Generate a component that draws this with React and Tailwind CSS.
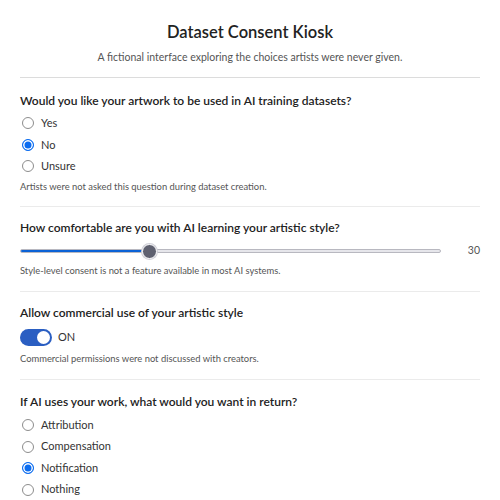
import React from "react";

function Radio({ label, checked }) {
  return (
    <div className="flex items-center h-[21.5px] pl-[2px] text-[11px] text-[#333]">
      {checked ? (
        <span className="block w-[12px] h-[12px] rounded-full border border-[#0b6cf0] bg-[#0b6cf0] shadow-[inset_0_0_0_1.5px_#ffffff]" />
      ) : (
        <span className="block w-[12px] h-[12px] rounded-full border border-[#8d8d8d] bg-white" />
      )}
      <span className="ml-[7px]">{label}</span>
    </div>
  );
}

export default function App() {
  return (
    <div className="w-[500px] h-[500px] overflow-hidden bg-white px-5 text-[#222]" style={{ fontFamily: 'Lato, "Open Sans", sans-serif' }}>
      <div className="pt-[20px] text-center">
        <h1 className="text-[16.5px] leading-6 font-semibold text-[#222]">Dataset Consent Kiosk</h1>
        <p className="mt-[3px] text-[10.5px] leading-5 text-[#555]">A fictional interface exploring the choices artists were never given.</p>
      </div>
      <div className="mt-[10px] border-t border-[#dcdcdc]" />

      <section className="pt-[13px] pb-[11px] border-b border-[#ebebeb]">
        <h2 className="text-[12px] leading-5 font-semibold">Would you like your artwork to be used in AI training datasets?</h2>
        <div className="mt-[1.5px]">
          <Radio label="Yes" />
          <Radio label="No" checked />
          <Radio label="Unsure" />
        </div>
        <p className="mt-[2px] text-[9.4px] leading-4 text-[#555]">Artists were not asked this question during dataset creation.</p>
      </section>

      <section className="pt-[11px] pb-[12px] border-b border-[#ebebeb]">
        <h2 className="text-[12px] leading-5 font-semibold">How comfortable are you with AI learning your artistic style?</h2>
        <div className="mt-[3px] h-5 flex items-center">
          <div className="relative flex-1 h-5 flex items-center">
            <div className="w-full h-[4px] rounded-full bg-[#e6e6eb] border border-[#b8b8c0] overflow-hidden">
              <div className="h-full bg-[#0b62d6]" style={{ width: "31%" }} />
            </div>
            <div className="absolute top-[2.5px] left-[122px] w-[15px] h-[15px] rounded-full bg-[#5f6170] border-[1.5px] border-white shadow-[0_0_0_1px_#d0d0d8]" />
          </div>
          <div className="w-[39px] text-right text-[10.5px] text-[#555]">30</div>
        </div>
        <p className="mt-[2px] text-[9.4px] leading-4 text-[#555]">Style-level consent is not a feature available in most AI systems.</p>
      </section>

      <section className="pt-[11px] pb-[12px] border-b border-[#ebebeb]">
        <h2 className="text-[12px] leading-5 font-semibold">Allow commercial use of your artistic style</h2>
        <div className="mt-[4px] h-5 flex items-center">
          <div className="relative w-[32px] h-[17px] rounded-full bg-[#2a5ec2]">
            <div className="absolute top-[2px] right-[2px] w-[13px] h-[13px] rounded-full bg-white" />
          </div>
          <span className="ml-[6px] text-[11px] text-[#333]">ON</span>
        </div>
        <p className="mt-[4px] text-[9.4px] leading-4 text-[#555]">Commercial permissions were not discussed with creators.</p>
      </section>

      <section className="pt-[12px]">
        <h2 className="text-[12px] leading-5 font-semibold">If AI uses your work, what would you want in return?</h2>
        <div className="mt-[2.25px]">
          <Radio label="Attribution" />
          <Radio label="Compensation" />
          <Radio label="Notification" checked />
          <Radio label="Nothing" />
        </div>
      </section>
    </div>
  );
}
